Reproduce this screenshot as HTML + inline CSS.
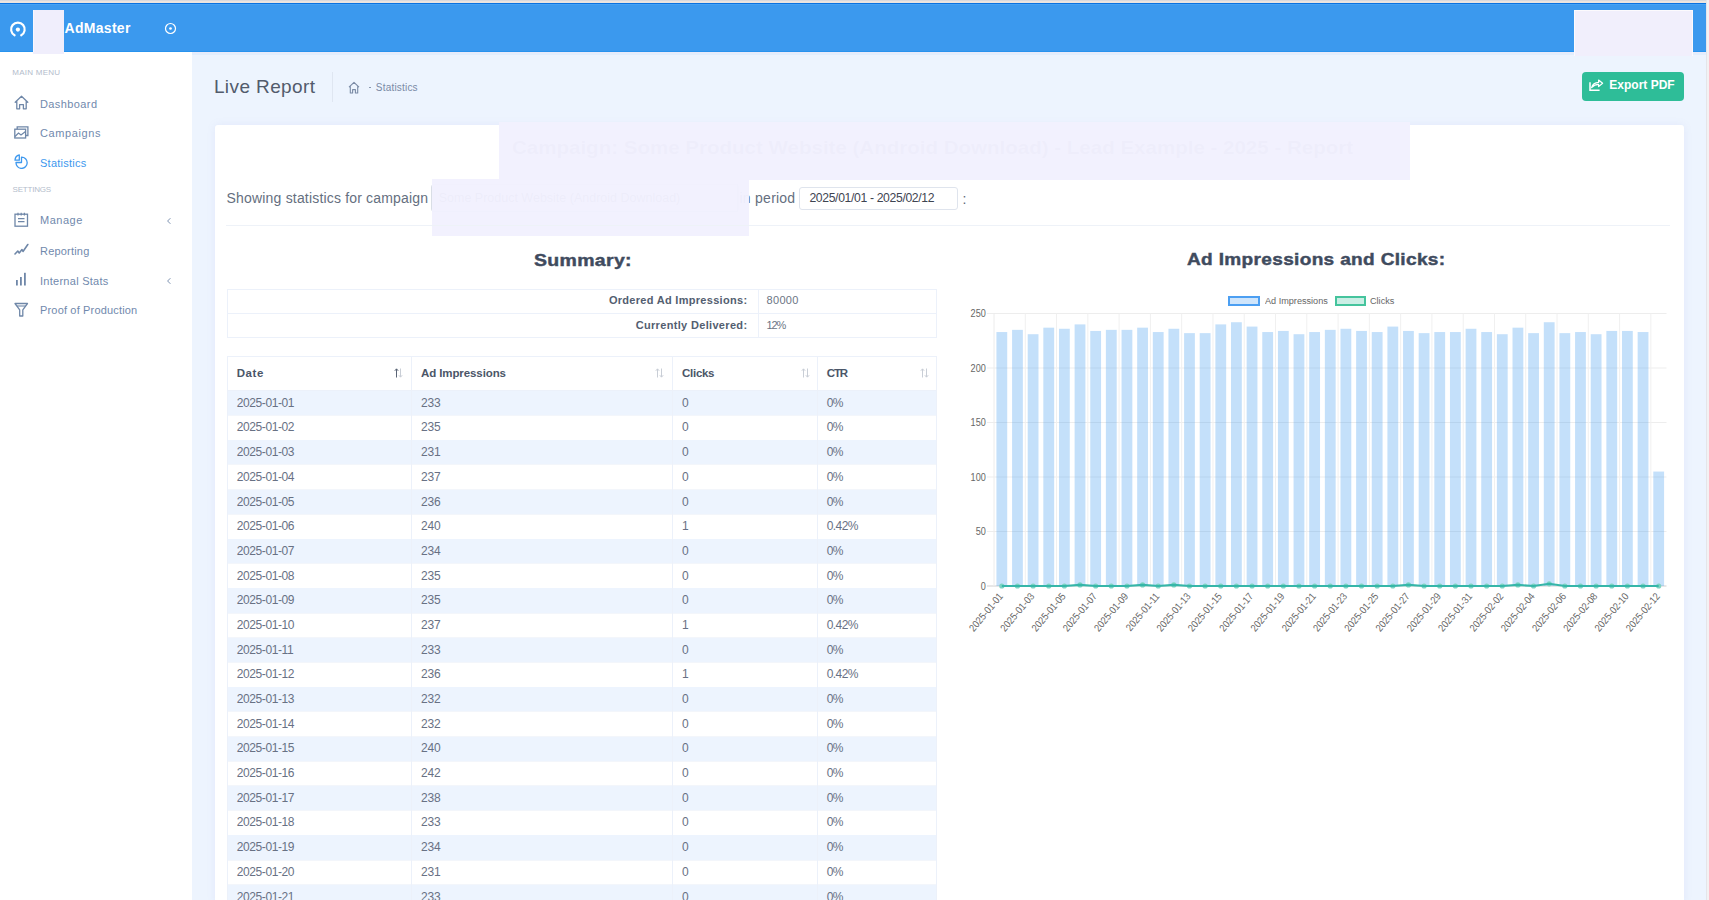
<!DOCTYPE html>
<html><head><meta charset="utf-8"><title>Live Report</title>
<style>
html,body{margin:0;padding:0;width:1709px;height:900px;overflow:hidden;background:#edf4fe;font-family:"Liberation Sans", sans-serif;}
.t{position:absolute;white-space:nowrap;}
.r{position:absolute;}
</style></head><body>
<div class="r" style="left:0.00px;top:0.00px;width:1709.00px;height:1.00px;background:#d8d9de"></div><div class="r" style="left:0.00px;top:1.00px;width:1709.00px;height:1.50px;background:#ebe4df"></div><div class="r" style="left:0.00px;top:2.50px;width:1706.00px;height:1.10px;background:#0a72e0"></div><div class="r" style="left:0.00px;top:3.60px;width:1706.00px;height:48.20px;background:#3b99ee"></div><div class="r" style="left:0.00px;top:50.60px;width:1706.00px;height:1.20px;background:#2893ee"></div><div class="r" style="left:0.00px;top:3.60px;width:1706.00px;height:1.40px;background:#46a2f5"></div><svg class="r" style="left:8px;top:19.8px" width="20" height="19" viewBox="0 0 20 19"><path d="M6.6 15.3 A6.8 6.8 0 1 1 13.2 15.3" fill="none" stroke="#fff" stroke-width="2.2" stroke-linecap="round"/><circle cx="9.9" cy="9.6" r="2.1" fill="#fff"/></svg><div class="r" style="left:33.00px;top:10.00px;width:31.20px;height:44.40px;background:#f0eefc;border-left:1px solid #f8f7fe;box-sizing:border-box"></div><div class="t" style="left:64.50px;top:20.58px;font-size:14px;line-height:14px;font-weight:700;letter-spacing:0.3px;color:#ffffff;">AdMaster</div><svg class="r" style="left:164px;top:22px" width="13" height="13" viewBox="0 0 13 13"><circle cx="6.5" cy="6.5" r="5" fill="none" stroke="#fff" stroke-width="1.2"/><circle cx="6.5" cy="6.5" r="1.35" fill="#fff"/></svg><div class="r" style="left:1706.00px;top:0.00px;width:3.00px;height:900.00px;background:#f3f1f3"></div><div class="r" style="left:1706.00px;top:0.00px;width:1.00px;height:900.00px;background:#e4e5e9"></div><div class="r" style="left:0.00px;top:51.80px;width:192.00px;height:848.20px;background:#ffffff"></div><div class="r" style="left:192.00px;top:51.80px;width:1514.00px;height:848.20px;background:#edf4fe"></div><div class="r" style="left:192.00px;top:51.80px;width:1514.00px;height:1.20px;background:#ebeaf9"></div><div class="r" style="left:192.00px;top:53.00px;width:1514.00px;height:1.50px;background:#e3eefd"></div><div class="r" style="left:33.00px;top:51.80px;width:31.20px;height:2.60px;background:#f0eefc"></div><div class="r" style="left:1574.00px;top:10.00px;width:119.30px;height:45.50px;background:#f1effc;border:1px solid #fcfafd;border-bottom:none;box-sizing:border-box"></div><div class="t" style="left:12.30px;top:68.96px;font-size:8px;line-height:8px;font-weight:400;letter-spacing:0.25px;color:#b3bccb;">MAIN MENU</div><div class="t" style="left:12.50px;top:186.46px;font-size:8px;line-height:8px;font-weight:400;letter-spacing:-0.2px;color:#b3bccb;">SETTINGS</div><div class="t" style="left:40.00px;top:98.57px;font-size:11px;line-height:11px;font-weight:400;letter-spacing:0.4px;color:#7189ad;">Dashboard</div><div class="t" style="left:40.00px;top:127.87px;font-size:11px;line-height:11px;font-weight:400;letter-spacing:0.6px;color:#7189ad;">Campaigns</div><div class="t" style="left:40.00px;top:157.87px;font-size:11px;line-height:11px;font-weight:400;letter-spacing:0.25px;color:#3d98ee;">Statistics</div><div class="t" style="left:40.00px;top:215.27px;font-size:11px;line-height:11px;font-weight:400;letter-spacing:0.5px;color:#7189ad;">Manage</div><div class="t" style="left:40.00px;top:246.07px;font-size:11px;line-height:11px;font-weight:400;letter-spacing:0.2px;color:#7189ad;">Reporting</div><div class="t" style="left:40.00px;top:276.07px;font-size:11px;line-height:11px;font-weight:400;letter-spacing:0.27px;color:#7189ad;">Internal Stats</div><div class="t" style="left:40.00px;top:305.27px;font-size:11px;line-height:11px;font-weight:400;letter-spacing:0.17px;color:#7189ad;">Proof of Production</div><svg class="r" style="left:14px;top:95px" width="15" height="15" viewBox="0 0 15 15"><path d="M1.2 7.2 L7.5 1.3 L13.8 7.2 M2.8 5.8 V13.8 H5.6 V9.6 H9.4 V13.8 H12.2 V5.8" fill="none" stroke="#6f87a8" stroke-width="1.3" stroke-linejoin="round" stroke-linecap="round"/></svg><svg class="r" style="left:14px;top:125px" width="15" height="14" viewBox="0 0 15 14"><rect x="0.8" y="4.2" width="10.8" height="8.8" fill="none" stroke="#6f87a8" stroke-width="1.3"/><path d="M3.2 4.2 V1.8 H13.9 V10.5 H11.6" fill="none" stroke="#6f87a8" stroke-width="1.3"/><path d="M1 11.5 L4.5 8 L7 10 L11.5 6.5" fill="none" stroke="#6f87a8" stroke-width="1.2"/></svg><svg class="r" style="left:14px;top:154px" width="15" height="15" viewBox="0 0 15 15"><path d="M7.5 3.2 A5.6 5.6 0 1 1 2 8.5 H7.5 Z" fill="none" stroke="#3d98ee" stroke-width="1.3" stroke-linejoin="round"/><path d="M1 6.2 A5.5 5.5 0 0 1 5.3 1 V6.2 Z" fill="none" stroke="#3d98ee" stroke-width="1.3" stroke-linejoin="round"/></svg><svg class="r" style="left:14px;top:212px" width="15" height="15" viewBox="0 0 15 15"><rect x="1" y="2.2" width="12.5" height="12" fill="none" stroke="#6f87a8" stroke-width="1.3"/><path d="M4 0.8 V3.5 M7.2 0.8 V3.5 M10.4 0.8 V3.5 M4 6.6 H10.5 M4 9.6 H10.5" stroke="#6f87a8" stroke-width="1.2"/></svg><svg class="r" style="left:14px;top:243px" width="15" height="13" viewBox="0 0 15 13"><path d="M1 11 L3.8 8 L5.2 10 L8 6.5 L9 8.5 L13.8 1.5" fill="none" stroke="#6f87a8" stroke-width="1.6" stroke-linejoin="round" stroke-linecap="round"/></svg><svg class="r" style="left:15px;top:272px" width="12" height="14" viewBox="0 0 12 14"><rect x="1" y="8" width="1.8" height="5.5" fill="#6f87a8"/><rect x="5" y="5" width="1.8" height="8.5" fill="#6f87a8"/><rect x="9" y="0.8" width="1.8" height="12.7" fill="#6f87a8"/></svg><svg class="r" style="left:14px;top:302px" width="15" height="15" viewBox="0 0 15 15"><path d="M1 1.5 H13.5 L8.8 7.8 V14 H5.7 V7.8 Z" fill="none" stroke="#6f87a8" stroke-width="1.3" stroke-linejoin="round"/><path d="M3 4 H11.5" stroke="#6f87a8" stroke-width="1.1"/></svg><svg class="r" style="left:166px;top:217px" width="6" height="8" viewBox="0 0 6 8"><path d="M4.4 1.2 L1.6 4 L4.4 6.8" fill="none" stroke="#6f87a8" stroke-width="0.9"/></svg><svg class="r" style="left:166px;top:276.8px" width="6" height="8" viewBox="0 0 6 8"><path d="M4.4 1.2 L1.6 4 L4.4 6.8" fill="none" stroke="#6f87a8" stroke-width="0.9"/></svg><div class="t" style="left:213.90px;top:77.43px;font-size:19px;line-height:19px;font-weight:400;letter-spacing:0.4px;color:#525b6c;">Live Report</div><div class="r" style="left:332.00px;top:71.80px;width:1.00px;height:30.70px;background:#dfe6f1"></div><svg class="r" style="left:348px;top:81px" width="12" height="13" viewBox="0 0 12 13"><path d="M1 6.2 L6 1.3 L11 6.2 M2.3 5 V12 H4.6 V8.6 H7.4 V12 H9.7 V5" fill="none" stroke="#7a8aa5" stroke-width="1.1" stroke-linejoin="round"/></svg><div class="r" style="left:369.00px;top:86.80px;width:2.20px;height:1.10px;background:#8a98ae"></div><div class="t" style="left:375.80px;top:83.00px;font-size:10px;line-height:10px;font-weight:400;letter-spacing:0.2px;color:#7a8aa5;">Statistics</div><div class="r" style="left:1582.00px;top:72.00px;width:102.00px;height:29.00px;background:#2ebd98;border-radius:4px"></div><svg class="r" style="left:1588px;top:78px" width="16" height="14" viewBox="0 0 16 14"><path d="M2 4.2 V12.2 H11.6" fill="none" stroke="#fff" stroke-width="1.5"/><path d="M3.6 9.6 C4.6 6 7 4.6 10.6 4.4 V2 L14.6 5.3 L10.6 8.6 V6.4 C7.5 6.4 5.5 7.6 3.6 9.6 Z" fill="none" stroke="#fff" stroke-width="1.2" stroke-linejoin="round"/></svg><div class="t" style="left:1609.30px;top:78.64px;font-size:12px;line-height:12px;font-weight:700;letter-spacing:0px;color:#ffffff;">Export PDF</div><div class="r" style="left:214.50px;top:125.00px;width:1469.30px;height:780.00px;background:#ffffff;border-radius:3px;box-shadow:0 0 8px rgba(140,130,220,0.10)"></div><div class="t" style="left:226.60px;top:190.78px;font-size:14px;line-height:14px;font-weight:400;letter-spacing:0.18px;color:#656f80;">Showing statistics for campaign</div><div class="r" style="left:430.60px;top:184.00px;width:308.40px;height:27.70px;border:1px solid #d9dee6;border-radius:3px;box-sizing:border-box"></div><div class="t" style="left:512.00px;top:137.53px;font-size:19px;line-height:19px;font-weight:700;letter-spacing:0px;color:#8d96a6;transform:scaleX(1.08);transform-origin:0 0">Campaign: Some Product Website (Android Download) - Lead Example - 2025 - Report</div><div class="t" style="left:438.70px;top:191.88px;font-size:12.5px;line-height:12.5px;font-weight:400;letter-spacing:0px;color:#6c7480;">Some Product Website (Android Download)</div><div class="r" style="left:432.00px;top:211.20px;width:306.00px;height:1.00px;background:#c9ced8"></div><div class="r" style="left:737.00px;top:184.00px;width:1.00px;height:28.20px;background:#c9ced8"></div><div class="t" style="left:739.50px;top:190.78px;font-size:14px;line-height:14px;font-weight:400;letter-spacing:0.2px;color:#656f80;">in</div><div class="r" style="left:499.00px;top:122.00px;width:911.30px;height:58.40px;background:rgba(242,240,254,0.965)"></div><div class="r" style="left:432.30px;top:178.50px;width:317.20px;height:57.30px;background:rgba(242,240,254,0.965)"></div><div class="t" style="left:755.10px;top:190.78px;font-size:14px;line-height:14px;font-weight:400;letter-spacing:0.23px;color:#656f80;">period</div><div class="r" style="left:799.40px;top:187.00px;width:158.80px;height:23.40px;border:1px solid #dfe4ed;border-radius:3px;box-sizing:border-box;background:#fff"></div><div class="t" style="left:809.40px;top:191.71px;font-size:12.2px;line-height:12.2px;font-weight:400;letter-spacing:-0.35px;color:#3e4451;">2025/01/01 - 2025/02/12</div><div class="t" style="left:962.50px;top:192.18px;font-size:14px;line-height:14px;font-weight:400;letter-spacing:0px;color:#5d6779;">:</div><div class="r" style="left:226.00px;top:225.00px;width:1444.00px;height:1.00px;background:#eef2f8"></div><div class="t" style="left:533.90px;top:251.69px;font-size:17px;line-height:17px;font-weight:700;letter-spacing:0.3px;color:#3f4b5e;transform:scaleX(1.145);transform-origin:0 0;-webkit-text-stroke:0.45px #3f4b5e">Summary:</div><div class="r" style="left:227.40px;top:289.10px;width:709.20px;height:49.20px;border:1px solid #ecf1fa;box-sizing:border-box"></div><div class="r" style="left:227.40px;top:313.40px;width:709.20px;height:1.00px;background:#ecf1fa"></div><div class="r" style="left:757.50px;top:289.10px;width:1.00px;height:49.20px;background:#ecf1fa"></div><div class="t" style="right:961.60px;top:295.07px;font-size:11px;line-height:11px;font-weight:700;letter-spacing:0.3px;color:#535e70;text-align:right;">Ordered Ad Impressions:</div><div class="t" style="right:961.60px;top:319.97px;font-size:11px;line-height:11px;font-weight:700;letter-spacing:0.33px;color:#535e70;text-align:right;">Currently Delivered:</div><div class="t" style="left:766.60px;top:295.07px;font-size:11px;line-height:11px;font-weight:400;letter-spacing:0.3px;color:#6c7584;">80000</div><div class="t" style="left:766.60px;top:319.97px;font-size:11px;line-height:11px;font-weight:400;letter-spacing:-1.2px;color:#6c7584;">12%</div><div class="r" style="left:227.40px;top:356.10px;width:709.20px;height:548.90px;border:1px solid #ecf1fa;box-sizing:border-box"></div><div class="r" style="left:228.40px;top:390.90px;width:707.20px;height:24.69px;background:#edf4fe"></div><div class="r" style="left:228.40px;top:415.09px;width:707.20px;height:1.00px;background:#f3f6fb"></div><div class="r" style="left:228.40px;top:439.78px;width:707.20px;height:1.00px;background:#f3f6fb"></div><div class="r" style="left:228.40px;top:440.28px;width:707.20px;height:24.69px;background:#edf4fe"></div><div class="r" style="left:228.40px;top:464.47px;width:707.20px;height:1.00px;background:#f3f6fb"></div><div class="r" style="left:228.40px;top:489.16px;width:707.20px;height:1.00px;background:#f3f6fb"></div><div class="r" style="left:228.40px;top:489.66px;width:707.20px;height:24.69px;background:#edf4fe"></div><div class="r" style="left:228.40px;top:513.85px;width:707.20px;height:1.00px;background:#f3f6fb"></div><div class="r" style="left:228.40px;top:538.54px;width:707.20px;height:1.00px;background:#f3f6fb"></div><div class="r" style="left:228.40px;top:539.04px;width:707.20px;height:24.69px;background:#edf4fe"></div><div class="r" style="left:228.40px;top:563.23px;width:707.20px;height:1.00px;background:#f3f6fb"></div><div class="r" style="left:228.40px;top:587.92px;width:707.20px;height:1.00px;background:#f3f6fb"></div><div class="r" style="left:228.40px;top:588.42px;width:707.20px;height:24.69px;background:#edf4fe"></div><div class="r" style="left:228.40px;top:612.61px;width:707.20px;height:1.00px;background:#f3f6fb"></div><div class="r" style="left:228.40px;top:637.30px;width:707.20px;height:1.00px;background:#f3f6fb"></div><div class="r" style="left:228.40px;top:637.80px;width:707.20px;height:24.69px;background:#edf4fe"></div><div class="r" style="left:228.40px;top:661.99px;width:707.20px;height:1.00px;background:#f3f6fb"></div><div class="r" style="left:228.40px;top:686.68px;width:707.20px;height:1.00px;background:#f3f6fb"></div><div class="r" style="left:228.40px;top:687.18px;width:707.20px;height:24.69px;background:#edf4fe"></div><div class="r" style="left:228.40px;top:711.37px;width:707.20px;height:1.00px;background:#f3f6fb"></div><div class="r" style="left:228.40px;top:736.06px;width:707.20px;height:1.00px;background:#f3f6fb"></div><div class="r" style="left:228.40px;top:736.56px;width:707.20px;height:24.69px;background:#edf4fe"></div><div class="r" style="left:228.40px;top:760.75px;width:707.20px;height:1.00px;background:#f3f6fb"></div><div class="r" style="left:228.40px;top:785.44px;width:707.20px;height:1.00px;background:#f3f6fb"></div><div class="r" style="left:228.40px;top:785.94px;width:707.20px;height:24.69px;background:#edf4fe"></div><div class="r" style="left:228.40px;top:810.13px;width:707.20px;height:1.00px;background:#f3f6fb"></div><div class="r" style="left:228.40px;top:834.82px;width:707.20px;height:1.00px;background:#f3f6fb"></div><div class="r" style="left:228.40px;top:835.32px;width:707.20px;height:24.69px;background:#edf4fe"></div><div class="r" style="left:228.40px;top:859.51px;width:707.20px;height:1.00px;background:#f3f6fb"></div><div class="r" style="left:228.40px;top:884.20px;width:707.20px;height:1.00px;background:#f3f6fb"></div><div class="r" style="left:228.40px;top:884.70px;width:707.20px;height:24.69px;background:#edf4fe"></div><div class="r" style="left:228.40px;top:908.89px;width:707.20px;height:1.00px;background:#f3f6fb"></div><div class="r" style="left:410.70px;top:356.10px;width:1.00px;height:548.90px;background:#ecf1fa"></div><div class="r" style="left:672.10px;top:356.10px;width:1.00px;height:548.90px;background:#ecf1fa"></div><div class="r" style="left:817.20px;top:356.10px;width:1.00px;height:548.90px;background:#ecf1fa"></div><div class="r" style="left:227.40px;top:390.40px;width:709.20px;height:1.00px;background:#ecf1fa"></div><div class="t" style="left:236.70px;top:367.50px;font-size:11.5px;line-height:11.5px;font-weight:700;letter-spacing:0.6px;color:#4b5668;">Date</div><div class="t" style="left:421.00px;top:367.50px;font-size:11.5px;line-height:11.5px;font-weight:700;letter-spacing:-0.1px;color:#4b5668;">Ad Impressions</div><div class="t" style="left:682.10px;top:367.50px;font-size:11.5px;line-height:11.5px;font-weight:700;letter-spacing:-0.3px;color:#4b5668;">Clicks</div><div class="t" style="left:826.80px;top:367.50px;font-size:11.5px;line-height:11.5px;font-weight:700;letter-spacing:-1.2px;color:#4b5668;">CTR</div><svg class="r" style="left:393.8px;top:368px" width="9" height="10" viewBox="0 0 9 10"><path d="M2.5 9.5 V1 M0.8 2.8 L2.5 0.8 L4.2 2.8" fill="none" stroke="#5a6475" stroke-width="1"/><path d="M6.5 0.5 V9 M4.8 7.2 L6.5 9.2 L8.2 7.2" fill="none" stroke="#c9ced6" stroke-width="1"/></svg><svg class="r" style="left:655.4px;top:368px" width="9" height="10" viewBox="0 0 9 10"><path d="M2.5 9.5 V1 M0.8 2.8 L2.5 0.8 L4.2 2.8" fill="none" stroke="#c9ced6" stroke-width="1"/><path d="M6.5 0.5 V9 M4.8 7.2 L6.5 9.2 L8.2 7.2" fill="none" stroke="#c9ced6" stroke-width="1"/></svg><svg class="r" style="left:800.5px;top:368px" width="9" height="10" viewBox="0 0 9 10"><path d="M2.5 9.5 V1 M0.8 2.8 L2.5 0.8 L4.2 2.8" fill="none" stroke="#c9ced6" stroke-width="1"/><path d="M6.5 0.5 V9 M4.8 7.2 L6.5 9.2 L8.2 7.2" fill="none" stroke="#c9ced6" stroke-width="1"/></svg><svg class="r" style="left:920.2px;top:368px" width="9" height="10" viewBox="0 0 9 10"><path d="M2.5 9.5 V1 M0.8 2.8 L2.5 0.8 L4.2 2.8" fill="none" stroke="#c9ced6" stroke-width="1"/><path d="M6.5 0.5 V9 M4.8 7.2 L6.5 9.2 L8.2 7.2" fill="none" stroke="#c9ced6" stroke-width="1"/></svg><div class="t" style="left:236.70px;top:396.74px;font-size:12px;line-height:12px;font-weight:400;letter-spacing:-0.4px;color:#687184;">2025-01-01</div><div class="t" style="left:421.00px;top:396.74px;font-size:12px;line-height:12px;font-weight:400;letter-spacing:-0.2px;color:#687184;">233</div><div class="t" style="left:682.10px;top:396.74px;font-size:12px;line-height:12px;font-weight:400;letter-spacing:-0.2px;color:#687184;">0</div><div class="t" style="left:826.80px;top:396.74px;font-size:12px;line-height:12px;font-weight:400;letter-spacing:-0.6px;color:#687184;">0%</div><div class="t" style="left:236.70px;top:421.43px;font-size:12px;line-height:12px;font-weight:400;letter-spacing:-0.4px;color:#687184;">2025-01-02</div><div class="t" style="left:421.00px;top:421.43px;font-size:12px;line-height:12px;font-weight:400;letter-spacing:-0.2px;color:#687184;">235</div><div class="t" style="left:682.10px;top:421.43px;font-size:12px;line-height:12px;font-weight:400;letter-spacing:-0.2px;color:#687184;">0</div><div class="t" style="left:826.80px;top:421.43px;font-size:12px;line-height:12px;font-weight:400;letter-spacing:-0.6px;color:#687184;">0%</div><div class="t" style="left:236.70px;top:446.12px;font-size:12px;line-height:12px;font-weight:400;letter-spacing:-0.4px;color:#687184;">2025-01-03</div><div class="t" style="left:421.00px;top:446.12px;font-size:12px;line-height:12px;font-weight:400;letter-spacing:-0.2px;color:#687184;">231</div><div class="t" style="left:682.10px;top:446.12px;font-size:12px;line-height:12px;font-weight:400;letter-spacing:-0.2px;color:#687184;">0</div><div class="t" style="left:826.80px;top:446.12px;font-size:12px;line-height:12px;font-weight:400;letter-spacing:-0.6px;color:#687184;">0%</div><div class="t" style="left:236.70px;top:470.81px;font-size:12px;line-height:12px;font-weight:400;letter-spacing:-0.4px;color:#687184;">2025-01-04</div><div class="t" style="left:421.00px;top:470.81px;font-size:12px;line-height:12px;font-weight:400;letter-spacing:-0.2px;color:#687184;">237</div><div class="t" style="left:682.10px;top:470.81px;font-size:12px;line-height:12px;font-weight:400;letter-spacing:-0.2px;color:#687184;">0</div><div class="t" style="left:826.80px;top:470.81px;font-size:12px;line-height:12px;font-weight:400;letter-spacing:-0.6px;color:#687184;">0%</div><div class="t" style="left:236.70px;top:495.50px;font-size:12px;line-height:12px;font-weight:400;letter-spacing:-0.4px;color:#687184;">2025-01-05</div><div class="t" style="left:421.00px;top:495.50px;font-size:12px;line-height:12px;font-weight:400;letter-spacing:-0.2px;color:#687184;">236</div><div class="t" style="left:682.10px;top:495.50px;font-size:12px;line-height:12px;font-weight:400;letter-spacing:-0.2px;color:#687184;">0</div><div class="t" style="left:826.80px;top:495.50px;font-size:12px;line-height:12px;font-weight:400;letter-spacing:-0.6px;color:#687184;">0%</div><div class="t" style="left:236.70px;top:520.19px;font-size:12px;line-height:12px;font-weight:400;letter-spacing:-0.4px;color:#687184;">2025-01-06</div><div class="t" style="left:421.00px;top:520.19px;font-size:12px;line-height:12px;font-weight:400;letter-spacing:-0.2px;color:#687184;">240</div><div class="t" style="left:682.10px;top:520.19px;font-size:12px;line-height:12px;font-weight:400;letter-spacing:-0.2px;color:#687184;">1</div><div class="t" style="left:826.80px;top:520.19px;font-size:12px;line-height:12px;font-weight:400;letter-spacing:-0.6px;color:#687184;">0.42%</div><div class="t" style="left:236.70px;top:544.88px;font-size:12px;line-height:12px;font-weight:400;letter-spacing:-0.4px;color:#687184;">2025-01-07</div><div class="t" style="left:421.00px;top:544.88px;font-size:12px;line-height:12px;font-weight:400;letter-spacing:-0.2px;color:#687184;">234</div><div class="t" style="left:682.10px;top:544.88px;font-size:12px;line-height:12px;font-weight:400;letter-spacing:-0.2px;color:#687184;">0</div><div class="t" style="left:826.80px;top:544.88px;font-size:12px;line-height:12px;font-weight:400;letter-spacing:-0.6px;color:#687184;">0%</div><div class="t" style="left:236.70px;top:569.57px;font-size:12px;line-height:12px;font-weight:400;letter-spacing:-0.4px;color:#687184;">2025-01-08</div><div class="t" style="left:421.00px;top:569.57px;font-size:12px;line-height:12px;font-weight:400;letter-spacing:-0.2px;color:#687184;">235</div><div class="t" style="left:682.10px;top:569.57px;font-size:12px;line-height:12px;font-weight:400;letter-spacing:-0.2px;color:#687184;">0</div><div class="t" style="left:826.80px;top:569.57px;font-size:12px;line-height:12px;font-weight:400;letter-spacing:-0.6px;color:#687184;">0%</div><div class="t" style="left:236.70px;top:594.26px;font-size:12px;line-height:12px;font-weight:400;letter-spacing:-0.4px;color:#687184;">2025-01-09</div><div class="t" style="left:421.00px;top:594.26px;font-size:12px;line-height:12px;font-weight:400;letter-spacing:-0.2px;color:#687184;">235</div><div class="t" style="left:682.10px;top:594.26px;font-size:12px;line-height:12px;font-weight:400;letter-spacing:-0.2px;color:#687184;">0</div><div class="t" style="left:826.80px;top:594.26px;font-size:12px;line-height:12px;font-weight:400;letter-spacing:-0.6px;color:#687184;">0%</div><div class="t" style="left:236.70px;top:618.95px;font-size:12px;line-height:12px;font-weight:400;letter-spacing:-0.4px;color:#687184;">2025-01-10</div><div class="t" style="left:421.00px;top:618.95px;font-size:12px;line-height:12px;font-weight:400;letter-spacing:-0.2px;color:#687184;">237</div><div class="t" style="left:682.10px;top:618.95px;font-size:12px;line-height:12px;font-weight:400;letter-spacing:-0.2px;color:#687184;">1</div><div class="t" style="left:826.80px;top:618.95px;font-size:12px;line-height:12px;font-weight:400;letter-spacing:-0.6px;color:#687184;">0.42%</div><div class="t" style="left:236.70px;top:643.64px;font-size:12px;line-height:12px;font-weight:400;letter-spacing:-0.4px;color:#687184;">2025-01-11</div><div class="t" style="left:421.00px;top:643.64px;font-size:12px;line-height:12px;font-weight:400;letter-spacing:-0.2px;color:#687184;">233</div><div class="t" style="left:682.10px;top:643.64px;font-size:12px;line-height:12px;font-weight:400;letter-spacing:-0.2px;color:#687184;">0</div><div class="t" style="left:826.80px;top:643.64px;font-size:12px;line-height:12px;font-weight:400;letter-spacing:-0.6px;color:#687184;">0%</div><div class="t" style="left:236.70px;top:668.33px;font-size:12px;line-height:12px;font-weight:400;letter-spacing:-0.4px;color:#687184;">2025-01-12</div><div class="t" style="left:421.00px;top:668.33px;font-size:12px;line-height:12px;font-weight:400;letter-spacing:-0.2px;color:#687184;">236</div><div class="t" style="left:682.10px;top:668.33px;font-size:12px;line-height:12px;font-weight:400;letter-spacing:-0.2px;color:#687184;">1</div><div class="t" style="left:826.80px;top:668.33px;font-size:12px;line-height:12px;font-weight:400;letter-spacing:-0.6px;color:#687184;">0.42%</div><div class="t" style="left:236.70px;top:693.02px;font-size:12px;line-height:12px;font-weight:400;letter-spacing:-0.4px;color:#687184;">2025-01-13</div><div class="t" style="left:421.00px;top:693.02px;font-size:12px;line-height:12px;font-weight:400;letter-spacing:-0.2px;color:#687184;">232</div><div class="t" style="left:682.10px;top:693.02px;font-size:12px;line-height:12px;font-weight:400;letter-spacing:-0.2px;color:#687184;">0</div><div class="t" style="left:826.80px;top:693.02px;font-size:12px;line-height:12px;font-weight:400;letter-spacing:-0.6px;color:#687184;">0%</div><div class="t" style="left:236.70px;top:717.71px;font-size:12px;line-height:12px;font-weight:400;letter-spacing:-0.4px;color:#687184;">2025-01-14</div><div class="t" style="left:421.00px;top:717.71px;font-size:12px;line-height:12px;font-weight:400;letter-spacing:-0.2px;color:#687184;">232</div><div class="t" style="left:682.10px;top:717.71px;font-size:12px;line-height:12px;font-weight:400;letter-spacing:-0.2px;color:#687184;">0</div><div class="t" style="left:826.80px;top:717.71px;font-size:12px;line-height:12px;font-weight:400;letter-spacing:-0.6px;color:#687184;">0%</div><div class="t" style="left:236.70px;top:742.40px;font-size:12px;line-height:12px;font-weight:400;letter-spacing:-0.4px;color:#687184;">2025-01-15</div><div class="t" style="left:421.00px;top:742.40px;font-size:12px;line-height:12px;font-weight:400;letter-spacing:-0.2px;color:#687184;">240</div><div class="t" style="left:682.10px;top:742.40px;font-size:12px;line-height:12px;font-weight:400;letter-spacing:-0.2px;color:#687184;">0</div><div class="t" style="left:826.80px;top:742.40px;font-size:12px;line-height:12px;font-weight:400;letter-spacing:-0.6px;color:#687184;">0%</div><div class="t" style="left:236.70px;top:767.09px;font-size:12px;line-height:12px;font-weight:400;letter-spacing:-0.4px;color:#687184;">2025-01-16</div><div class="t" style="left:421.00px;top:767.09px;font-size:12px;line-height:12px;font-weight:400;letter-spacing:-0.2px;color:#687184;">242</div><div class="t" style="left:682.10px;top:767.09px;font-size:12px;line-height:12px;font-weight:400;letter-spacing:-0.2px;color:#687184;">0</div><div class="t" style="left:826.80px;top:767.09px;font-size:12px;line-height:12px;font-weight:400;letter-spacing:-0.6px;color:#687184;">0%</div><div class="t" style="left:236.70px;top:791.78px;font-size:12px;line-height:12px;font-weight:400;letter-spacing:-0.4px;color:#687184;">2025-01-17</div><div class="t" style="left:421.00px;top:791.78px;font-size:12px;line-height:12px;font-weight:400;letter-spacing:-0.2px;color:#687184;">238</div><div class="t" style="left:682.10px;top:791.78px;font-size:12px;line-height:12px;font-weight:400;letter-spacing:-0.2px;color:#687184;">0</div><div class="t" style="left:826.80px;top:791.78px;font-size:12px;line-height:12px;font-weight:400;letter-spacing:-0.6px;color:#687184;">0%</div><div class="t" style="left:236.70px;top:816.47px;font-size:12px;line-height:12px;font-weight:400;letter-spacing:-0.4px;color:#687184;">2025-01-18</div><div class="t" style="left:421.00px;top:816.47px;font-size:12px;line-height:12px;font-weight:400;letter-spacing:-0.2px;color:#687184;">233</div><div class="t" style="left:682.10px;top:816.47px;font-size:12px;line-height:12px;font-weight:400;letter-spacing:-0.2px;color:#687184;">0</div><div class="t" style="left:826.80px;top:816.47px;font-size:12px;line-height:12px;font-weight:400;letter-spacing:-0.6px;color:#687184;">0%</div><div class="t" style="left:236.70px;top:841.16px;font-size:12px;line-height:12px;font-weight:400;letter-spacing:-0.4px;color:#687184;">2025-01-19</div><div class="t" style="left:421.00px;top:841.16px;font-size:12px;line-height:12px;font-weight:400;letter-spacing:-0.2px;color:#687184;">234</div><div class="t" style="left:682.10px;top:841.16px;font-size:12px;line-height:12px;font-weight:400;letter-spacing:-0.2px;color:#687184;">0</div><div class="t" style="left:826.80px;top:841.16px;font-size:12px;line-height:12px;font-weight:400;letter-spacing:-0.6px;color:#687184;">0%</div><div class="t" style="left:236.70px;top:865.85px;font-size:12px;line-height:12px;font-weight:400;letter-spacing:-0.4px;color:#687184;">2025-01-20</div><div class="t" style="left:421.00px;top:865.85px;font-size:12px;line-height:12px;font-weight:400;letter-spacing:-0.2px;color:#687184;">231</div><div class="t" style="left:682.10px;top:865.85px;font-size:12px;line-height:12px;font-weight:400;letter-spacing:-0.2px;color:#687184;">0</div><div class="t" style="left:826.80px;top:865.85px;font-size:12px;line-height:12px;font-weight:400;letter-spacing:-0.6px;color:#687184;">0%</div><div class="t" style="left:236.70px;top:890.54px;font-size:12px;line-height:12px;font-weight:400;letter-spacing:-0.4px;color:#687184;">2025-01-21</div><div class="t" style="left:421.00px;top:890.54px;font-size:12px;line-height:12px;font-weight:400;letter-spacing:-0.2px;color:#687184;">233</div><div class="t" style="left:682.10px;top:890.54px;font-size:12px;line-height:12px;font-weight:400;letter-spacing:-0.2px;color:#687184;">0</div><div class="t" style="left:826.80px;top:890.54px;font-size:12px;line-height:12px;font-weight:400;letter-spacing:-0.6px;color:#687184;">0%</div><div class="t" style="left:1186.70px;top:250.99px;font-size:17px;line-height:17px;font-weight:700;letter-spacing:0.3px;color:#3f4b5e;transform:scaleX(1.12);transform-origin:0 0;-webkit-text-stroke:0.45px #3f4b5e">Ad Impressions and Clicks:</div><div class="r" style="left:1228.30px;top:296.10px;width:31.90px;height:10.00px;background:rgba(62,152,240,0.25);border:2px solid #4c9ff2;box-sizing:border-box"></div><div class="t" style="left:1264.50px;top:295.85px;font-size:9.6px;line-height:9.6px;font-weight:400;letter-spacing:0px;color:#666666;transform:scaleX(0.95);transform-origin:0 0">Ad Impressions</div><div class="r" style="left:1334.50px;top:296.10px;width:31.70px;height:10.00px;background:rgba(46,189,152,0.25);border:2px solid #45c49d;box-sizing:border-box"></div><div class="t" style="left:1370.10px;top:295.85px;font-size:9.6px;line-height:9.6px;font-weight:400;letter-spacing:0px;color:#666666;transform:scaleX(0.95);transform-origin:0 0">Clicks</div><svg class="r" style="left:0;top:0" width="1709" height="900" viewBox="0 0 1709 900"><line x1="987" y1="586.00" x2="1666.50" y2="586.00" stroke="#cfcfcf" stroke-width="1"/><line x1="987" y1="531.50" x2="1666.50" y2="531.50" stroke="#ededed" stroke-width="1"/><line x1="987" y1="477.00" x2="1666.50" y2="477.00" stroke="#ededed" stroke-width="1"/><line x1="987" y1="422.50" x2="1666.50" y2="422.50" stroke="#ededed" stroke-width="1"/><line x1="987" y1="368.00" x2="1666.50" y2="368.00" stroke="#ededed" stroke-width="1"/><line x1="987" y1="313.50" x2="1666.50" y2="313.50" stroke="#ededed" stroke-width="1"/><line x1="994.00" y1="313.5" x2="994.00" y2="586" stroke="#ececec" stroke-width="1"/><line x1="1025.28" y1="313.5" x2="1025.28" y2="586" stroke="#f0f0f0" stroke-width="1"/><line x1="1056.56" y1="313.5" x2="1056.56" y2="586" stroke="#f0f0f0" stroke-width="1"/><line x1="1087.84" y1="313.5" x2="1087.84" y2="586" stroke="#f0f0f0" stroke-width="1"/><line x1="1119.12" y1="313.5" x2="1119.12" y2="586" stroke="#f0f0f0" stroke-width="1"/><line x1="1150.40" y1="313.5" x2="1150.40" y2="586" stroke="#f0f0f0" stroke-width="1"/><line x1="1181.67" y1="313.5" x2="1181.67" y2="586" stroke="#f0f0f0" stroke-width="1"/><line x1="1212.95" y1="313.5" x2="1212.95" y2="586" stroke="#f0f0f0" stroke-width="1"/><line x1="1244.23" y1="313.5" x2="1244.23" y2="586" stroke="#f0f0f0" stroke-width="1"/><line x1="1275.51" y1="313.5" x2="1275.51" y2="586" stroke="#f0f0f0" stroke-width="1"/><line x1="1306.79" y1="313.5" x2="1306.79" y2="586" stroke="#f0f0f0" stroke-width="1"/><line x1="1338.07" y1="313.5" x2="1338.07" y2="586" stroke="#f0f0f0" stroke-width="1"/><line x1="1369.35" y1="313.5" x2="1369.35" y2="586" stroke="#f0f0f0" stroke-width="1"/><line x1="1400.63" y1="313.5" x2="1400.63" y2="586" stroke="#f0f0f0" stroke-width="1"/><line x1="1431.91" y1="313.5" x2="1431.91" y2="586" stroke="#f0f0f0" stroke-width="1"/><line x1="1463.19" y1="313.5" x2="1463.19" y2="586" stroke="#f0f0f0" stroke-width="1"/><line x1="1494.47" y1="313.5" x2="1494.47" y2="586" stroke="#f0f0f0" stroke-width="1"/><line x1="1525.74" y1="313.5" x2="1525.74" y2="586" stroke="#f0f0f0" stroke-width="1"/><line x1="1557.02" y1="313.5" x2="1557.02" y2="586" stroke="#f0f0f0" stroke-width="1"/><line x1="1588.30" y1="313.5" x2="1588.30" y2="586" stroke="#f0f0f0" stroke-width="1"/><line x1="1619.58" y1="313.5" x2="1619.58" y2="586" stroke="#f0f0f0" stroke-width="1"/><line x1="1650.86" y1="313.5" x2="1650.86" y2="586" stroke="#f0f0f0" stroke-width="1"/><rect x="996.42" y="332.03" width="10.8" height="253.97" fill="rgba(61,152,238,0.3)"/><rect x="1012.06" y="329.85" width="10.8" height="256.15" fill="rgba(61,152,238,0.3)"/><rect x="1027.70" y="334.21" width="10.8" height="251.79" fill="rgba(61,152,238,0.3)"/><rect x="1043.34" y="327.67" width="10.8" height="258.33" fill="rgba(61,152,238,0.3)"/><rect x="1058.98" y="328.76" width="10.8" height="257.24" fill="rgba(61,152,238,0.3)"/><rect x="1074.62" y="324.40" width="10.8" height="261.60" fill="rgba(61,152,238,0.3)"/><rect x="1090.26" y="330.94" width="10.8" height="255.06" fill="rgba(61,152,238,0.3)"/><rect x="1105.90" y="329.85" width="10.8" height="256.15" fill="rgba(61,152,238,0.3)"/><rect x="1121.54" y="329.85" width="10.8" height="256.15" fill="rgba(61,152,238,0.3)"/><rect x="1137.18" y="327.67" width="10.8" height="258.33" fill="rgba(61,152,238,0.3)"/><rect x="1152.82" y="332.03" width="10.8" height="253.97" fill="rgba(61,152,238,0.3)"/><rect x="1168.45" y="328.76" width="10.8" height="257.24" fill="rgba(61,152,238,0.3)"/><rect x="1184.09" y="333.12" width="10.8" height="252.88" fill="rgba(61,152,238,0.3)"/><rect x="1199.73" y="333.12" width="10.8" height="252.88" fill="rgba(61,152,238,0.3)"/><rect x="1215.37" y="324.40" width="10.8" height="261.60" fill="rgba(61,152,238,0.3)"/><rect x="1231.01" y="322.22" width="10.8" height="263.78" fill="rgba(61,152,238,0.3)"/><rect x="1246.65" y="326.58" width="10.8" height="259.42" fill="rgba(61,152,238,0.3)"/><rect x="1262.29" y="332.03" width="10.8" height="253.97" fill="rgba(61,152,238,0.3)"/><rect x="1277.93" y="330.94" width="10.8" height="255.06" fill="rgba(61,152,238,0.3)"/><rect x="1293.57" y="334.21" width="10.8" height="251.79" fill="rgba(61,152,238,0.3)"/><rect x="1309.21" y="332.03" width="10.8" height="253.97" fill="rgba(61,152,238,0.3)"/><rect x="1324.85" y="329.85" width="10.8" height="256.15" fill="rgba(61,152,238,0.3)"/><rect x="1340.49" y="328.76" width="10.8" height="257.24" fill="rgba(61,152,238,0.3)"/><rect x="1356.13" y="330.94" width="10.8" height="255.06" fill="rgba(61,152,238,0.3)"/><rect x="1371.77" y="332.03" width="10.8" height="253.97" fill="rgba(61,152,238,0.3)"/><rect x="1387.41" y="326.58" width="10.8" height="259.42" fill="rgba(61,152,238,0.3)"/><rect x="1403.05" y="330.94" width="10.8" height="255.06" fill="rgba(61,152,238,0.3)"/><rect x="1418.69" y="333.12" width="10.8" height="252.88" fill="rgba(61,152,238,0.3)"/><rect x="1434.33" y="332.03" width="10.8" height="253.97" fill="rgba(61,152,238,0.3)"/><rect x="1449.97" y="332.03" width="10.8" height="253.97" fill="rgba(61,152,238,0.3)"/><rect x="1465.61" y="328.76" width="10.8" height="257.24" fill="rgba(61,152,238,0.3)"/><rect x="1481.25" y="332.03" width="10.8" height="253.97" fill="rgba(61,152,238,0.3)"/><rect x="1496.88" y="334.21" width="10.8" height="251.79" fill="rgba(61,152,238,0.3)"/><rect x="1512.52" y="327.67" width="10.8" height="258.33" fill="rgba(61,152,238,0.3)"/><rect x="1528.16" y="333.12" width="10.8" height="252.88" fill="rgba(61,152,238,0.3)"/><rect x="1543.80" y="322.22" width="10.8" height="263.78" fill="rgba(61,152,238,0.3)"/><rect x="1559.44" y="333.12" width="10.8" height="252.88" fill="rgba(61,152,238,0.3)"/><rect x="1575.08" y="332.03" width="10.8" height="253.97" fill="rgba(61,152,238,0.3)"/><rect x="1590.72" y="334.21" width="10.8" height="251.79" fill="rgba(61,152,238,0.3)"/><rect x="1606.36" y="330.94" width="10.8" height="255.06" fill="rgba(61,152,238,0.3)"/><rect x="1622.00" y="330.94" width="10.8" height="255.06" fill="rgba(61,152,238,0.3)"/><rect x="1637.64" y="332.03" width="10.8" height="253.97" fill="rgba(61,152,238,0.3)"/><rect x="1653.28" y="471.55" width="10.8" height="114.45" fill="rgba(61,152,238,0.3)"/><circle cx="1001.82" cy="586.00" r="2.6" fill="#7dd3c2"/><circle cx="1017.46" cy="586.00" r="2.6" fill="#7dd3c2"/><circle cx="1033.10" cy="586.00" r="2.6" fill="#7dd3c2"/><circle cx="1048.74" cy="586.00" r="2.6" fill="#7dd3c2"/><circle cx="1064.38" cy="586.00" r="2.6" fill="#7dd3c2"/><circle cx="1080.02" cy="584.91" r="2.6" fill="#7dd3c2"/><circle cx="1095.66" cy="586.00" r="2.6" fill="#7dd3c2"/><circle cx="1111.30" cy="586.00" r="2.6" fill="#7dd3c2"/><circle cx="1126.94" cy="586.00" r="2.6" fill="#7dd3c2"/><circle cx="1142.58" cy="584.91" r="2.6" fill="#7dd3c2"/><circle cx="1158.22" cy="586.00" r="2.6" fill="#7dd3c2"/><circle cx="1173.85" cy="584.91" r="2.6" fill="#7dd3c2"/><circle cx="1189.49" cy="586.00" r="2.6" fill="#7dd3c2"/><circle cx="1205.13" cy="586.00" r="2.6" fill="#7dd3c2"/><circle cx="1220.77" cy="586.00" r="2.6" fill="#7dd3c2"/><circle cx="1236.41" cy="586.00" r="2.6" fill="#7dd3c2"/><circle cx="1252.05" cy="586.00" r="2.6" fill="#7dd3c2"/><circle cx="1267.69" cy="586.00" r="2.6" fill="#7dd3c2"/><circle cx="1283.33" cy="586.00" r="2.6" fill="#7dd3c2"/><circle cx="1298.97" cy="586.00" r="2.6" fill="#7dd3c2"/><circle cx="1314.61" cy="586.00" r="2.6" fill="#7dd3c2"/><circle cx="1330.25" cy="586.00" r="2.6" fill="#7dd3c2"/><circle cx="1345.89" cy="586.00" r="2.6" fill="#7dd3c2"/><circle cx="1361.53" cy="586.00" r="2.6" fill="#7dd3c2"/><circle cx="1377.17" cy="586.00" r="2.6" fill="#7dd3c2"/><circle cx="1392.81" cy="586.00" r="2.6" fill="#7dd3c2"/><circle cx="1408.45" cy="584.91" r="2.6" fill="#7dd3c2"/><circle cx="1424.09" cy="586.00" r="2.6" fill="#7dd3c2"/><circle cx="1439.73" cy="586.00" r="2.6" fill="#7dd3c2"/><circle cx="1455.37" cy="586.00" r="2.6" fill="#7dd3c2"/><circle cx="1471.01" cy="586.00" r="2.6" fill="#7dd3c2"/><circle cx="1486.65" cy="586.00" r="2.6" fill="#7dd3c2"/><circle cx="1502.28" cy="586.00" r="2.6" fill="#7dd3c2"/><circle cx="1517.92" cy="584.91" r="2.6" fill="#7dd3c2"/><circle cx="1533.56" cy="586.00" r="2.6" fill="#7dd3c2"/><circle cx="1549.20" cy="583.82" r="2.6" fill="#7dd3c2"/><circle cx="1564.84" cy="586.00" r="2.6" fill="#7dd3c2"/><circle cx="1580.48" cy="586.00" r="2.6" fill="#7dd3c2"/><circle cx="1596.12" cy="586.00" r="2.6" fill="#7dd3c2"/><circle cx="1611.76" cy="586.00" r="2.6" fill="#7dd3c2"/><circle cx="1627.40" cy="586.00" r="2.6" fill="#7dd3c2"/><circle cx="1643.04" cy="586.00" r="2.6" fill="#7dd3c2"/><circle cx="1658.68" cy="586.00" r="2.6" fill="#7dd3c2"/><path d="M1001.82 586.00 L1017.46 586.00 L1033.10 586.00 L1048.74 586.00 L1064.38 586.00 L1080.02 584.91 L1095.66 586.00 L1111.30 586.00 L1126.94 586.00 L1142.58 584.91 L1158.22 586.00 L1173.85 584.91 L1189.49 586.00 L1205.13 586.00 L1220.77 586.00 L1236.41 586.00 L1252.05 586.00 L1267.69 586.00 L1283.33 586.00 L1298.97 586.00 L1314.61 586.00 L1330.25 586.00 L1345.89 586.00 L1361.53 586.00 L1377.17 586.00 L1392.81 586.00 L1408.45 584.91 L1424.09 586.00 L1439.73 586.00 L1455.37 586.00 L1471.01 586.00 L1486.65 586.00 L1502.28 586.00 L1517.92 584.91 L1533.56 586.00 L1549.20 583.82 L1564.84 586.00 L1580.48 586.00 L1596.12 586.00 L1611.76 586.00 L1627.40 586.00 L1643.04 586.00 L1658.68 586.00" fill="none" stroke="#36b6a9" stroke-width="2.1"/><text transform="translate(985.8,589.70) scale(0.885,1)" text-anchor="end" font-family="Liberation Sans" font-size="10.3" fill="#666">0</text><text transform="translate(985.8,535.20) scale(0.885,1)" text-anchor="end" font-family="Liberation Sans" font-size="10.3" fill="#666">50</text><text transform="translate(985.8,480.70) scale(0.885,1)" text-anchor="end" font-family="Liberation Sans" font-size="10.3" fill="#666">100</text><text transform="translate(985.8,426.20) scale(0.885,1)" text-anchor="end" font-family="Liberation Sans" font-size="10.3" fill="#666">150</text><text transform="translate(985.8,371.70) scale(0.885,1)" text-anchor="end" font-family="Liberation Sans" font-size="10.3" fill="#666">200</text><text transform="translate(985.8,317.20) scale(0.885,1)" text-anchor="end" font-family="Liberation Sans" font-size="10.3" fill="#666">250</text><text transform="translate(1003.62,596.5) rotate(-50) scale(0.885,1)" text-anchor="end" font-family="Liberation Sans" font-size="10.3" fill="#666">2025-01-01</text><text transform="translate(1034.90,596.5) rotate(-50) scale(0.885,1)" text-anchor="end" font-family="Liberation Sans" font-size="10.3" fill="#666">2025-01-03</text><text transform="translate(1066.18,596.5) rotate(-50) scale(0.885,1)" text-anchor="end" font-family="Liberation Sans" font-size="10.3" fill="#666">2025-01-05</text><text transform="translate(1097.46,596.5) rotate(-50) scale(0.885,1)" text-anchor="end" font-family="Liberation Sans" font-size="10.3" fill="#666">2025-01-07</text><text transform="translate(1128.74,596.5) rotate(-50) scale(0.885,1)" text-anchor="end" font-family="Liberation Sans" font-size="10.3" fill="#666">2025-01-09</text><text transform="translate(1160.02,596.5) rotate(-50) scale(0.885,1)" text-anchor="end" font-family="Liberation Sans" font-size="10.3" fill="#666">2025-01-11</text><text transform="translate(1191.29,596.5) rotate(-50) scale(0.885,1)" text-anchor="end" font-family="Liberation Sans" font-size="10.3" fill="#666">2025-01-13</text><text transform="translate(1222.57,596.5) rotate(-50) scale(0.885,1)" text-anchor="end" font-family="Liberation Sans" font-size="10.3" fill="#666">2025-01-15</text><text transform="translate(1253.85,596.5) rotate(-50) scale(0.885,1)" text-anchor="end" font-family="Liberation Sans" font-size="10.3" fill="#666">2025-01-17</text><text transform="translate(1285.13,596.5) rotate(-50) scale(0.885,1)" text-anchor="end" font-family="Liberation Sans" font-size="10.3" fill="#666">2025-01-19</text><text transform="translate(1316.41,596.5) rotate(-50) scale(0.885,1)" text-anchor="end" font-family="Liberation Sans" font-size="10.3" fill="#666">2025-01-21</text><text transform="translate(1347.69,596.5) rotate(-50) scale(0.885,1)" text-anchor="end" font-family="Liberation Sans" font-size="10.3" fill="#666">2025-01-23</text><text transform="translate(1378.97,596.5) rotate(-50) scale(0.885,1)" text-anchor="end" font-family="Liberation Sans" font-size="10.3" fill="#666">2025-01-25</text><text transform="translate(1410.25,596.5) rotate(-50) scale(0.885,1)" text-anchor="end" font-family="Liberation Sans" font-size="10.3" fill="#666">2025-01-27</text><text transform="translate(1441.53,596.5) rotate(-50) scale(0.885,1)" text-anchor="end" font-family="Liberation Sans" font-size="10.3" fill="#666">2025-01-29</text><text transform="translate(1472.81,596.5) rotate(-50) scale(0.885,1)" text-anchor="end" font-family="Liberation Sans" font-size="10.3" fill="#666">2025-01-31</text><text transform="translate(1504.08,596.5) rotate(-50) scale(0.885,1)" text-anchor="end" font-family="Liberation Sans" font-size="10.3" fill="#666">2025-02-02</text><text transform="translate(1535.36,596.5) rotate(-50) scale(0.885,1)" text-anchor="end" font-family="Liberation Sans" font-size="10.3" fill="#666">2025-02-04</text><text transform="translate(1566.64,596.5) rotate(-50) scale(0.885,1)" text-anchor="end" font-family="Liberation Sans" font-size="10.3" fill="#666">2025-02-06</text><text transform="translate(1597.92,596.5) rotate(-50) scale(0.885,1)" text-anchor="end" font-family="Liberation Sans" font-size="10.3" fill="#666">2025-02-08</text><text transform="translate(1629.20,596.5) rotate(-50) scale(0.885,1)" text-anchor="end" font-family="Liberation Sans" font-size="10.3" fill="#666">2025-02-10</text><text transform="translate(1660.48,596.5) rotate(-50) scale(0.885,1)" text-anchor="end" font-family="Liberation Sans" font-size="10.3" fill="#666">2025-02-12</text></svg>
</body></html>
